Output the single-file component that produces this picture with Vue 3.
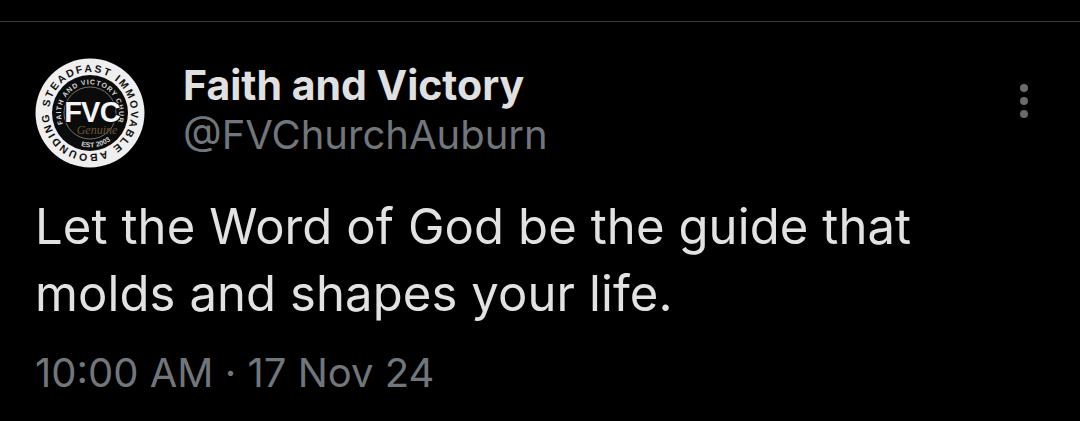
<script setup>
const tweet = {
  name: 'Faith and Victory',
  handle: '@FVChurchAuburn',
  lines: ['Let the Word of God be the guide that', 'molds and shapes your life.'],
  time: '10:00 AM',
  date: '17 Nov 24'
}
</script>

<template>
  <main class="page">
    <div class="rule"></div>
    <header class="head">
      <svg class="logo" viewBox="0 0 110 110" role="img" aria-label="FVC logo">
        <defs>
          <path id="outerArc" d="M71.270 92.630 A40 40 0 1 1 38.730 17.370 A40 40 0 0 1 71.270 92.630" />
          <path id="innerArc" d="M28 66 A29 29 0 1 1 82 66" />
          <path id="innerBottom" d="M46 88 A34 34 0 0 0 85 72" />
        </defs>
        <circle cx="55" cy="55" r="54.500" fill="#efefef" />
        <circle cx="55" cy="55" r="38" fill="#0b0b0b" />
        <circle cx="55" cy="55" r="26" fill="none" stroke="#8a8a8a" stroke-width="0.800" />
        <text class="ring-text"><textPath href="#outerArc" textLength="250" lengthAdjust="spacing">ABOUNDING STEADFAST IMMOVABLE</textPath></text>
        <text class="inner-text"><textPath href="#innerArc" textLength="122" lengthAdjust="spacing">FAITH AND VICTORY CHURCH</textPath></text>
        <text class="inner-text"><textPath href="#innerBottom">EST 2003</textPath></text>
        <text class="fvc" x="57" y="64" text-anchor="middle">FVC</text>
        <text class="script" x="62" y="76" text-anchor="middle">Genuine</text>
      </svg>
      <div class="who">
        <div class="name">{{ tweet.name }}</div>
        <div class="handle">{{ tweet.handle }}</div>
      </div>
      <div class="more" aria-label="More">
        <span></span><span></span><span></span>
      </div>
    </header>
    <p class="body">
      <span v-for="line in tweet.lines" :key="line">{{ line }}</span>
    </p>
    <div class="meta">{{ tweet.time }} · {{ tweet.date }}</div>
  </main>
</template>

<style>
html, body {
  background: #000;
}
</style>

<style scoped>
.page {
  width: 1080px;
  height: 421px;
  overflow: hidden;
  background: #000;
  font-family: Inter, "Liberation Sans", sans-serif;
  padding-top: 21px;
  box-sizing: border-box;
}

.rule {
  height: 1px;
  background: #3b3b3b;
}

.head {
  display: flex;
  align-items: flex-start;
  padding: 36px 52px 0 35px;
}

.logo {
  width: 110px;
  height: 110px;
  flex: none;
}

.ring-text {
  font: 700 10.500px "Liberation Sans", sans-serif;
  fill: #111;
}

.inner-text {
  font: 700 7px "Liberation Sans", sans-serif;
  fill: #d8d8d8;
}

.fvc {
  font: 700 29px "Liberation Sans", sans-serif;
  letter-spacing: -0.800px;
  fill: #f4f4f4;
  stroke: #0b0b0b;
  stroke-width: 2px;
  paint-order: stroke;
}

.script {
  font: italic 12px "Liberation Serif", serif;
  fill: #6b5434;
}

.who {
  margin-left: 38px;
  padding-top: 2px;
  flex: 1;
}

.name {
  font-size: 41px;
  line-height: 50px;
  font-weight: 700;
  color: #e0e0e0;
}

.handle {
  font-size: 40px;
  line-height: 50px;
  color: #71767b;
}

.more {
  display: flex;
  flex-direction: column;
  gap: 5px;
  padding-top: 26px;
}

.more span {
  width: 8px;
  height: 8px;
  border-radius: 50%;
  background: #6a6a6a;
}

.body {
  margin: 25px 0 0 35px;
  font-size: 49px;
  line-height: 67px;
  letter-spacing: 0.100px;
  color: #e2e2e2;
}

.body span {
  display: block;
}

.meta {
  margin: 24px 0 0 35px;
  font-size: 40px;
  line-height: 44px;
  color: #71767b;
}
</style>
